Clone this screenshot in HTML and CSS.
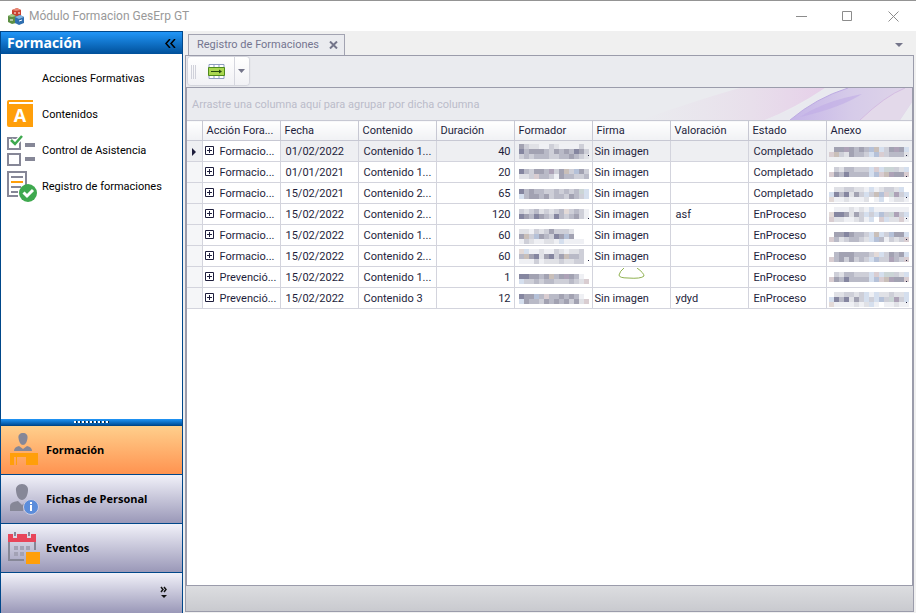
FILE: index.html
```html
<!DOCTYPE html>
<html lang="es">
<head>
    <meta charset="UTF-8">
    <meta name="viewport" content="width=device-width, initial-scale=1.0">
    <title>Módulo Formacion GesErp GT</title>
    <link rel="stylesheet" href="styles.css">
</head>
<body>
    <!-- window title bar -->
    <header class="titlebar">
        <svg class="logo" width="17" height="17" viewBox="0 0 17 17">
            <path d="M4 2l5-2 4 2v6l-5 1-4-2z" fill="#c8402f"/>
            <path d="M4 2l5-2 4 2-5 1z" fill="#e98a78"/>
            <path d="M0 8l4-2 4 2v7l-4 1-4-2z" fill="#5c8f43"/>
            <path d="M0 8l4-2 4 2-4 1z" fill="#a5cb8c"/>
            <path d="M7 9l5-2 4 2v6l-5 2-4-2z" fill="#2f6fb0"/>
            <path d="M7 9l5-2 4 2-5 2z" fill="#86b4de"/>
            <path d="M6 5h2M10 5h2M2 12h3M11 13l3-1" stroke="#fff"/>
        </svg>
        <h1>Módulo Formacion GesErp GT</h1>
        <div class="window-buttons">
            <button type="button" aria-label="Minimizar"><svg width="11" height="11" viewBox="0 0 11 11"><path d="M0 5.5h11"/></svg></button>
            <button type="button" aria-label="Maximizar"><svg width="11" height="11" viewBox="0 0 11 11"><path d="M.5.5h9v9h-9z"/></svg></button>
            <button type="button" aria-label="Cerrar"><svg width="11" height="11" viewBox="0 0 11 11"><path d="M.5.5l10 10M10.500.5l-10 10"/></svg></button>
        </div>
    </header>

    <main>
        <!-- navigation bar -->
        <aside class="sidebar">
            <div class="sidebar-title">
                <h2>Formación</h2>
                <button type="button" aria-label="Contraer">
                    <svg width="11" height="9" viewBox="0 0 11 9"><path d="M5 0L1 4.500l4 4.500M10 0L6 4.500l4 4.500" fill="none" stroke="#000" stroke-width="1.500"/></svg>
                </button>
            </div>
            <ul class="links">
                <li><a href="#"><span class="icon"></span>Acciones Formativas</a></li>
                <li><a href="#">
                    <svg class="icon" width="32" height="32" viewBox="0 0 32 32">
                        <path d="M2 3q0-2 2-2h24v2H4v2h24v23H4q-2 0-2-2z" fill="#ff9f0a"/>
                        <path d="M4 3h24v1H4z" fill="#fff"/>
                        <text x="15" y="23" text-anchor="middle" class="book-letter">A</text>
                    </svg>Contenidos</a></li>
                <li><a href="#">
                    <svg class="icon" width="32" height="32" viewBox="0 0 32 32">
                        <path d="M3 3h12v11H3zM3 19h12v11H3z" fill="none" stroke="#868797" stroke-width="2"/>
                        <path d="M20 8h10v4H20zM20 22h10v4H20z" fill="#868797"/>
                        <path d="M6 5l4 4 8-9" fill="none" stroke="#fff" stroke-width="5"/>
                        <path d="M6 5l4 4 7-8" fill="none" stroke="#3fa94f" stroke-width="2.500"/>
                    </svg>Control de Asistencia</a></li>
                <li><a href="#">
                    <svg class="icon" width="32" height="32" viewBox="0 0 32 32">
                        <path d="M13 25H3V1h18v14" fill="none" stroke="#868797" stroke-width="2"/>
                        <path d="M6 6h12M6 16h10M6 21h7" stroke="#868797" stroke-width="2"/>
                        <path d="M6 11h12" stroke="#ff9f0a" stroke-width="2"/>
                        <circle cx="23" cy="22" r="9" fill="#3fa94f"/>
                        <path d="M18.500 21.500l3.500 3.500 6-6" fill="none" stroke="#fff" stroke-width="3"/>
                    </svg>Registro de formaciones</a></li>
            </ul>
            <div class="splitter"></div>
            <nav class="groups">
                <button type="button" class="group active">
                    <svg width="32" height="32" viewBox="0 0 32 32">
                        <path d="M16-1c3 0 5 2 4.500 5-.5 4-2 7-4.500 7s-4-3-4.500-7C11 1 13-1 16-1z" fill="#868797"/>
                        <path d="M7 17q0-4 5-5l4 3 4-3q5 1 5 5z" fill="#868797"/>
                        <path d="M3 19h28v12H19v-8h-9v8H9v-8H7v8H3z" fill="#ff9f0a"/>
                    </svg>Formación</button>
                <button type="button" class="group">
                    <svg width="32" height="32" viewBox="0 0 32 32">
                        <path d="M15 1c4 0 6.500 3 6 6.500-.5 6-3 9.500-6 9.500s-5.500-3.500-6-9.500C8.500 4 11 1 15 1z" fill="#868797"/>
                        <path d="M3 28v-5q0-4 8-5l4 4 5-4-4 10z" fill="#868797"/>
                        <circle cx="24" cy="24" r="7.500" fill="#5b8ddb" stroke="#cfcde0"/>
                        <path d="M23 22h2v6h-2zM23 19h2v2h-2z" fill="#fff"/>
                    </svg>Fichas de Personal</button>
                <button type="button" class="group">
                    <svg width="32" height="32" viewBox="0 0 32 32">
                        <path d="M2 10v18h15M28 10v8" fill="none" stroke="#868797" stroke-width="2"/>
                        <path d="M1 2h5v4h4V2h10v4h4V2h5v8H1z" fill="#e8455a"/>
                        <path d="M8 0v4M22 0v4" stroke="#868797" stroke-width="2"/>
                        <path d="M7 14h4v4H7zM13 14h4v4h-4zM19 14h4v4h-4zM7 20h4v4H7zM13 20h4v4h-4z" fill="#a3a2b5"/>
                        <path d="M19 20h14v12H19z" fill="#ff9f0a"/>
                    </svg>Eventos</button>
            </nav>
            <div class="overflow-bar">
                <button type="button" aria-label="Configurar botones">
                    <svg width="8" height="14" viewBox="0 0 8 14"><path d="M1 1l2 2.500L1 6M4 1l2 2.500L4 6" fill="none" stroke="#111" stroke-width="1.500"/><path d="M1 9h6l-3 3z" fill="#111"/></svg>
                </button>
            </div>
        </aside>

        <!-- open document -->
        <section class="document">
            <div class="tabs">
                <div class="tab">
                    <span>Registro de Formaciones</span>
                    <button type="button" aria-label="Cerrar pestaña"><svg width="9" height="8" viewBox="0 0 9 8"><path d="M1 .5l7 7M8 .5l-7 7" stroke="#74758a" stroke-width="2"/></svg></button>
                </div>
                <button type="button" class="tab-list" aria-label="Lista de pestañas"><svg width="8" height="4" viewBox="0 0 8 4"><path d="M0 0h8L4 4z" fill="#74758a"/></svg></button>
            </div>
            <div class="panel">
                <div class="toolbar">
                    <div class="tools">
                        <span class="grip"></span>
                        <button type="button" class="tool" aria-label="Ajustar columnas">
                            <svg width="17" height="15" viewBox="0 0 17 15">
                                <path d="M1 .5h15v14H1zM6 0v15M11 0v15" fill="#fff" stroke="#8f9dc0"/>
                                <path d="M.5 3.500h16v8H.5z" fill="#aad751" stroke="#4f8a1c"/>
                                <path d="M3 7.500h10" stroke="#244a10"/><path d="M11 5.500l3 2-3 2z" fill="#244a10"/>
                            </svg>
                        </button>
                        <button type="button" class="more" aria-label="Más opciones"><svg width="7" height="4" viewBox="0 0 7 4"><path d="M0 0h7L3.500 4z" fill="#74758a"/></svg></button>
                    </div>
                </div>
                <div class="grid">
                    <div class="group-panel">
                        <p>Arrastre una columna aquí para agrupar por dicha columna</p>
                        <svg class="swoosh" width="352" height="32" viewBox="0 0 352 32">
                            <defs>
                                <linearGradient id="pink"><stop offset="0" stop-color="#e9e3ec" stop-opacity="0"/><stop offset=".6" stop-color="#e8dfeb"/><stop offset="1" stop-color="#e6d0e9"/></linearGradient>
                                <linearGradient id="violet"><stop offset="0" stop-color="#c5b5e8"/><stop offset=".5" stop-color="#d6cbe9"/><stop offset="1" stop-color="#dfd5e9"/></linearGradient>
                            </defs>
                            <path d="M80 32Q150 8 180 0h85Q235 20 205 32z" fill="url(#pink)"/>
                            <path d="M205 32Q240 20 265 0h24Q256 12 230 32z" fill="#e9e9ef"/>
                            <path d="M230 32Q256 10 288 0h64v14l-12 18z" fill="url(#violet)"/>
                            <path d="M240 29Q264 13 302 6 280 20 240 29z" fill="#c0ace6" opacity=".6"/>
                            <path d="M230 32Q256 10 288 0" fill="none" stroke="#bdabe2"/>
                            <path d="M300 32Q325 8 345 0h7v14l-12 18z" fill="#e3d9ea"/>
                            <path d="M300 32Q325 8 345 0" fill="none" stroke="#d4bce2"/>
                        </svg>
                    </div>
                    <table>
                        <colgroup>
                            <col class="mark"><col class="field"><col class="field"><col class="field"><col class="field"><col class="field"><col class="field"><col class="field"><col class="field"><col>
                        </colgroup>
                        <thead>
                            <tr><th></th><th>Acción Fora...</th><th>Fecha</th><th>Contenido</th><th>Duración</th><th>Formador</th><th>Firma</th><th>Valoración</th><th>Estado</th><th>Anexo</th></tr>
                        </thead>
                        <tbody></tbody>
                    </table>
                </div>
                <div class="statusbar"></div>
            </div>
        </section>
    </main>
    <script src="script.js"></script>
</body>
</html>
```
FILE: styles.css
```css
* {
    padding: 0;
    margin: 0;
    box-sizing: border-box;
}
body {
    display: flex;
    flex-direction: column;
    height: 100vh;
    background-color: #f0f0f0;
    color: #1e1e3c;
    font-family: Roboto, "Liberation Sans", sans-serif;
    font-size: 11px;
    line-height: 16px;
    overflow: hidden;
}
button {
    border: none;
    background: none;
    font: inherit;
    color: inherit;
}
svg {
    display: block;
    flex: none;
}

/* title bar */
.titlebar {
    display: flex;
    align-items: center;
    height: 31px;
    padding-left: 8px;
    gap: 4px;
    background-color: white;
    border-top: 1px solid #949494;
}
.titlebar h1 {
    flex: 1;
    color: #999;
    font-size: 12px;
    font-weight: normal;
}
.window-buttons {
    display: flex;
}
.window-buttons button {
    display: flex;
    justify-content: center;
    width: 46px;
}
.window-buttons path {
    fill: none;
    stroke: #8c8c8c;
}

main {
    display: flex;
    flex: 1;
    min-height: 0;
    gap: 2px;
}

/* sidebar */
.sidebar {
    display: flex;
    flex-direction: column;
    width: 183px;
    background-color: white;
    border: 1px solid #00478a;
    border-bottom: none;
    color: black;
}
.sidebar-title {
    display: flex;
    align-items: center;
    justify-content: space-between;
    height: 22px;
    padding: 0 6px;
    background: linear-gradient(#2196f8, #00509a);
}
.sidebar-title h2 {
    color: white;
    font-family: "Open Sans", sans-serif;
    font-size: 14px;
}
.links {
    flex: 1;
    padding: 7px 4px;
    list-style: none;
}
.links a {
    display: flex;
    align-items: center;
    gap: 5px;
    height: 36px;
    color: black;
    text-decoration: none;
}
.icon {
    width: 32px;
}
.book-letter {
    fill: white;
    font-family: "Open Sans", sans-serif;
    font-size: 18px;
    font-weight: bold;
}
.splitter {
    height: 7px;
    background: linear-gradient(#2196f8, #00509a);
    border-bottom: 1px solid #00478a;
}
.splitter::before {
    content: "";
    display: block;
    width: 36px;
    height: 2px;
    margin: 2px auto 0;
    background: repeating-linear-gradient(90deg, white 0 2px, #123 2px 3px, transparent 3px 4px);
}
.group {
    display: flex;
    align-items: center;
    gap: 7px;
    width: 100%;
    height: 49px;
    padding-left: 6px;
    background: linear-gradient(#f1f1f9, #9a98b8);
    border-bottom: 1px solid #00478a;
    font-family: "Open Sans", sans-serif;
    font-weight: bold;
}
.group svg {
    overflow: visible;
}
.group.active {
    background: linear-gradient(#ffcf8c, #ff9350);
}
.overflow-bar {
    display: flex;
    justify-content: flex-end;
    height: 40px;
    padding: 11px 14px;
    background: linear-gradient(#f1f1f9, #9a98b8);
}

/* document */
.document {
    display: flex;
    flex: 1;
    flex-direction: column;
    min-width: 0;
    padding: 3px 2px 1px 0;
}
.tabs {
    display: flex;
    align-items: center;
    justify-content: space-between;
    height: 21px;
    padding: 0 11px 0 3px;
}
.tab {
    display: flex;
    align-items: center;
    gap: 10px;
    height: 22px;
    padding: 0 6px 0 8px;
    background-color: #eaebef;
    border: 1px solid #a2a3b1;
    border-bottom: none;
    color: #74758f;
}
.panel {
    display: flex;
    flex: 1;
    flex-direction: column;
    min-height: 0;
    border: 1px solid #9b9cab;
    background-color: #eaebef;
}
.toolbar {
    height: 31px;
    padding: 1px 2px;
}
.tools {
    display: inline-flex;
    align-items: stretch;
    height: 28px;
    background: linear-gradient(white, #f1f1f5);
    border-radius: 3px;
    box-shadow: 0 0 2px #9b9cab;
}
.grip {
    width: 6px;
    margin: 8px 0 6px 3px;
    background: repeating-linear-gradient(90deg, #d0d1da 0 1px, transparent 1px 2px);
}
.tool {
    display: flex;
    align-items: center;
    padding: 0 9px 0 11px;
}
.more {
    display: flex;
    align-items: center;
    padding: 0 4px 0 3px;
    border-left: 1px solid #d5d6de;
}
.grid {
    flex: 1;
    min-height: 0;
    background-color: white;
    border: 1px solid #9b9cab;
    overflow: hidden;
}
.group-panel {
    display: flex;
    align-items: center;
    justify-content: space-between;
    height: 32px;
    padding: 2px 0 0 5px;
    background-color: #eaebef;
    color: #bbbcca;
}
.group-panel p {
    white-space: nowrap;
}
.swoosh {
    flex: 0 1 352px;
    min-width: 0;
    align-self: flex-end;
}

/* records */
table {
    width: 100%;
    border-collapse: collapse;
    table-layout: fixed;
}
.mark {
    width: 15px;
}
.field {
    width: 78px;
}
th, td {
    height: 21px;
    border: 1px solid #d3d4dd;
    text-align: left;
    white-space: nowrap;
    overflow: hidden;
}
th {
    height: 20px;
    padding-left: 4px;
    background: linear-gradient(white, #f0f1f4);
    border-color: #c7c8d3;
    font-weight: normal;
}
td {
    padding: 1px 0 0 5px;
}
tr > :first-child {
    border-left: none;
}
tr > :last-child {
    border-right: none;
}
td:first-child {
    background-color: #f5f6f8;
}
td:nth-child(2) {
    padding-left: 2px;
}
td:nth-child(5) {
    padding-right: 3px;
    text-align: right;
}
td:nth-child(6) {
    padding-left: 4px;
}
td:nth-child(7), td:nth-child(10) {
    padding-left: 2px;
}
.current td {
    background-color: #eeeff2;
}
.current td:nth-child(2) {
    background-color: white;
}
.name {
    display: flex;
    gap: 6px;
}
.name button {
    width: 9px;
    height: 9px;
    margin-top: 2px;
}
.hidden-text {
    width: 80px;
    height: 19px;
}
.signature {
    margin-left: 20px;
}
.statusbar {
    height: 25px;
    background: linear-gradient(#dcdde0, #c9cacf);
}
```
FILE: script.js
```js
// "person" and "file" hold the pixelated names, one letter per tile
const colors = {
    a: "#8586a0", b: "#a2a2b2", c: "#b9bac7", d: "#cecfd8", e: "#e0e1e6", f: "#eff0f4",
    w: "#e3dad8", p: "#d9cdd1", s: "#d5dfee", u: "#b5c1d8", v: "#ada2b7", g: "#cbd5d6", t: "#c9bfb9"
};

const rows = [
    { name: "Formacio...", date: "01/02/2022", content: "Contenido 1...", hours: 40, sign: "Sin imagen", note: "", state: "Completado",
        person: [2, ["bdeeffdeffffd", "acbbbcdbcbcabd", "dcdcccddccbcde"], true], file: [5, [" bbvbcbcutsdbvbs", "ptdebccdsupdcccep"]] },
    { name: "Formacio...", date: "01/01/2021", content: "Contenido 1...", hours: 20, sign: "Sin imagen", note: "", state: "Completado",
        person: [6, ["acdbbcvdbtdubd", "eedpccdfbccddc"], false], file: [4, [" deccdddspsggdes", "pbcaccccsuptvbbp"]] },
    { name: "Formacio...", date: "15/02/2021", content: "Contenido 2...", hours: 65, sign: "Sin imagen", note: "", state: "Completado",
        person: [5, ["acbccddcdcdcgs", "scbbcbdccdbcds"], false], file: [3, [" eeddeefsfeddes", "sacaebdsdtupgvds", "wffefffe fs feef"]] },
    { name: "Formacio...", date: "15/02/2022", content: "Contenido 2...", hours: 120, sign: "Sin imagen", note: "asf", state: "EnProceso",
        person: [4, ["dedcededcwdcdf", "abcabcdacdcbdf"], true], file: [2, [" fffefefsfffffff", "waabebdsdsudgvds", "peeffedfs pseepf"]] },
    { name: "Formacio...", date: "15/02/2022", content: "Contenido 1...", hours: 60, sign: "Sin imagen", note: "", state: "EnProceso",
        person: [3, ["eefdedbddde", "btdubcdabub", "fdeffeefsffff"], false], file: [6, [" bbabccdstsdubbs", "pcedccdesucfdedp"]] },
    { name: "Formacio...", date: "15/02/2022", content: "Contenido 2...", hours: 60, sign: "Sin imagen", note: "", state: "EnProceso",
        person: [2, ["wsffeffdefeed", "ctbaebadbtccd", "fffdfeeedeedd"], true], file: [5, [" cbbbcccdwsdbcbs", "pcbdbdcdsuddvcdp"]] },
    { name: "Prevenció...", date: "15/02/2022", content: "Contenido 1...", hours: 1, sign: "", note: "", state: "EnProceso",
        person: [6, ["aabbcbtcbvbcf", "sddcdccdddcdep"], false], file: [4, [" deccdddspsggdes", "pbcaccccsuptvbbp"]] },
    { name: "Prevenció...", date: "15/02/2022", content: "Contenido 3", hours: 12, sign: "Sin imagen", note: "ydyd", state: "EnProceso",
        person: [5, ["abbucpccbcbcf", "sbccdbcbcbdbep"], false], file: [3, [" eeddedsfseedees", "sacaebdsdsudgvds", "wffffefesf ffeff"]] }
];

const mosaic = ([top, lines], dot) => {
    let tiles = "";
    lines.forEach((line, y) => {
        [...line].forEach((key, x) => {
            if (colors[key]) {
                tiles += `<rect x="${x * 5}" y="${top + y * 5}" width="5" height="5" fill="${colors[key]}"/>`;
            }
        });
    });
    if (dot) {
        tiles += `<rect x="${dot}" y="13" width="1" height="1" fill="#1e1e3c"/>`;
    }
    return `<svg class="hidden-text" shape-rendering="crispEdges">${tiles}</svg>`;
};

const signature = `<svg class="signature" width="32" height="19" viewBox="0 0 32 19"><path d="M9 0Q5 3 4 7q0 3 9 3 13 1 16-2 0-3-7-8" fill="none" stroke="#8fb14f"/></svg>`;
const body = document.querySelector("tbody");

rows.forEach((row, i) => {
    const tr = document.createElement("tr");
    if (i === 0) {
        tr.className = "current";
    }
    tr.innerHTML = `
        <td>${i === 0 ? '<svg width="4" height="8" viewBox="0 0 4 8"><path d="M0 0l4 4-4 4z" fill="#1e1e3c"/></svg>' : ""}</td>
        <td><div class="name"><button type="button" aria-label="Expandir"><svg width="9" height="9" viewBox="0 0 9 9"><path d="M.5.5h8v8h-8zM2 4.500h5M4.500 2v5" fill="none" stroke="#1e1e3c"/></svg></button>${row.name}</div></td>
        <td>${row.date}</td>
        <td>${row.content}</td>
        <td>${row.hours}</td>
        <td>${mosaic(row.person, row.person[2] ? 69 : 0)}</td>
        <td>${row.sign || signature}</td>
        <td>${row.note}</td>
        <td>${row.state}</td>
        <td>${mosaic(row.file, 77)}</td>
    `;
    body.appendChild(tr);
});
```
